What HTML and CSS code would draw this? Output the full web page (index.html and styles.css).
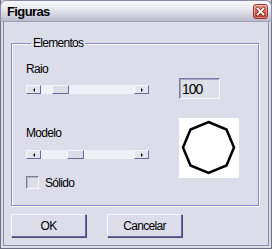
FILE: index.html
```html
<!DOCTYPE html>
<html>
<head>
<meta charset="utf-8">
<link rel="stylesheet" href="styles.css">
</head>
<body>
<div class="window">
  <div class="titlebar">
    <span class="title">Figuras</span>
    <span class="close"><svg width="11" height="11" viewBox="0 0 11 11"><path d="M2.5 2.5 L8.5 8.5 M8.5 2.5 L2.5 8.5" stroke="#7a2418" stroke-width="3.2" stroke-linecap="square"/><path d="M2.5 2.5 L8.5 8.5 M8.5 2.5 L2.5 8.5" stroke="#fff" stroke-width="1.8" stroke-linecap="square"/></svg></span>
  </div>
  <div class="client">
    <fieldset class="group">
      <legend>Elementos</legend>
      <div class="cols">
        <div class="left">
          <div class="label label-raio">Raio</div>
          <div class="scroll scroll-raio">
            <div class="sbtn"><div class="arr arr-left"></div></div>
            <div class="track"><div class="thumb" style="margin-left:11px"></div></div>
            <div class="sbtn"><div class="arr arr-right"></div></div>
          </div>
          <div class="label label-modelo">Modelo</div>
          <div class="scroll scroll-modelo">
            <div class="sbtn"><div class="arr arr-left"></div></div>
            <div class="track"><div class="thumb" style="margin-left:26px"></div></div>
            <div class="sbtn"><div class="arr arr-right"></div></div>
          </div>
          <label class="check"><span class="box"></span>Sólido</label>
        </div>
        <div class="right">
          <div class="edit">100</div>
          <div class="preview">
            <svg width="60" height="60" viewBox="0 0 60 60"><polygon points="29.5,4 47.5,11.5 55,29.5 47.5,47.5 29.5,55 11.5,47.5 4,29.5 11.5,11.5" fill="none" stroke="#000" stroke-width="2.5" stroke-linejoin="miter"/></svg>
          </div>
        </div>
      </div>
    </fieldset>
    <div class="buttons">
      <button class="btn">OK</button>
      <button class="btn">Cancelar</button>
    </div>
  </div>
</div>
</body>
</html>
```
FILE: styles.css
```css
* { box-sizing: border-box; }
html, body { margin: 0; padding: 0; }
body { width: 272px; height: 249px; background: #dcdde9; font-family: "Liberation Sans", Arial, sans-serif; font-size: 12px; letter-spacing: -0.7px; color: #000; }
.window { width: 272px; height: 249px; display: flex; flex-direction: column; border: 1px solid #6e6e86; border-top: none; background: #dcdde9; }
.titlebar { height: 22px; flex: none; display: flex; align-items: center; justify-content: space-between; padding: 0 3px 0 6px; background: linear-gradient(#f6f6fa 0%, #ebebf2 35%, #cfcfdd 75%, #b9b9cc 100%); border: 1px solid #8a8aa2; border-bottom-color: #a0a0b6; border-radius: 6px 6px 0 0; margin: 0 -1px; }
.title { font-weight: bold; font-size: 13px; letter-spacing: -0.6px; padding-top: 1px; }
.close { width: 15px; height: 15px; border-radius: 3px; background: linear-gradient(#eba395, #d4604c 55%, #bb3a27); border: 1px solid #9c3424; box-shadow: inset 0 0 0 1px rgba(255,255,255,0.35); display: flex; align-items: center; justify-content: center; margin-top: 1px; }
.client { flex: 1; margin: 0 2px 2px 2px; border: 1px solid #8a8aa8; border-top: none; padding: 0 9px 0 7px; display: flex; flex-direction: column; }
.group { margin: 14px 0 0 0; padding: 0 0 0 14px; height: 170px; min-width: 0; border: 1px solid #8a8ac4; box-shadow: 1px 1px 0 #fff, inset 1px 1px 0 #fff; }
.group legend { padding: 0 2px; margin-left: 5px; font-size: 12px; line-height: 14px; }
.cols { display: flex; }
.left { width: 123px; flex: none; display: flex; flex-direction: column; }
.right { margin-left: 30px; flex: none; display: flex; flex-direction: column; }
.label { font-size: 12px; height: 14px; line-height: 14px; }
.label-raio { margin-top: 12px; }
.scroll { display: flex; height: 9px; width: 123px; flex: none; }
.scroll-raio { margin-top: 9px; }
.label-modelo { margin-top: 32px; }
.scroll-modelo { margin-top: 10px; }
.sbtn { width: 15px; height: 9px; flex: none; background: #e4e5ef; border: 1px solid; border-color: #f7f7fb #6a6a9a #6a6a9a #f7f7fb; display: flex; align-items: center; justify-content: center; }
.track { width: 93px; height: 9px; flex: none; background: #eff0f6; display: flex; }
.thumb { width: 17px; height: 9px; flex: none; background: #dcdde9; border: 1px solid; border-color: #f7f7fb #6a6a9a #6a6a9a #f7f7fb; }
.arr { width: 0; height: 0; border-top: 2px solid transparent; border-bottom: 2px solid transparent; }
.arr-left { border-right: 2px solid #000; }
.arr-right { border-left: 2px solid #000; }
.edit { margin-top: 28px; width: 41px; height: 21px; background: #dde0e6; border: 1px solid; border-color: #7676ac #f7f7fb #f7f7fb #7676ac; box-shadow: inset 1px 1px 0 #a8a8c8; font-size: 14px; letter-spacing: -1px; padding: 2px 0 0 2px; line-height: 16px; }
.preview { margin-top: 19px; width: 60px; height: 60px; background: #fff; }
.check { display: flex; align-items: center; margin-top: 17px; font-size: 12px; height: 13px; }
.box { width: 13px; height: 13px; background: #dde0e6; border: 1px solid; border-color: #7c7c92 #f7f7fb #f7f7fb #7c7c92; box-shadow: inset 1px 1px 0 #b4b4c4; margin-right: 6px; }
.buttons { display: flex; gap: 21px; margin-top: 8px; }
.btn { width: 75px; height: 23px; background: #dcdde9; border: 1px solid; border-color: #f7f7fb #6c6ca0 #6c6ca0 #f7f7fb; box-shadow: 1px 1px 0 #4a4a70; font-family: "Liberation Sans", Arial, sans-serif; font-size: 12px; letter-spacing: -0.7px; padding: 0; color: #000; }
```
